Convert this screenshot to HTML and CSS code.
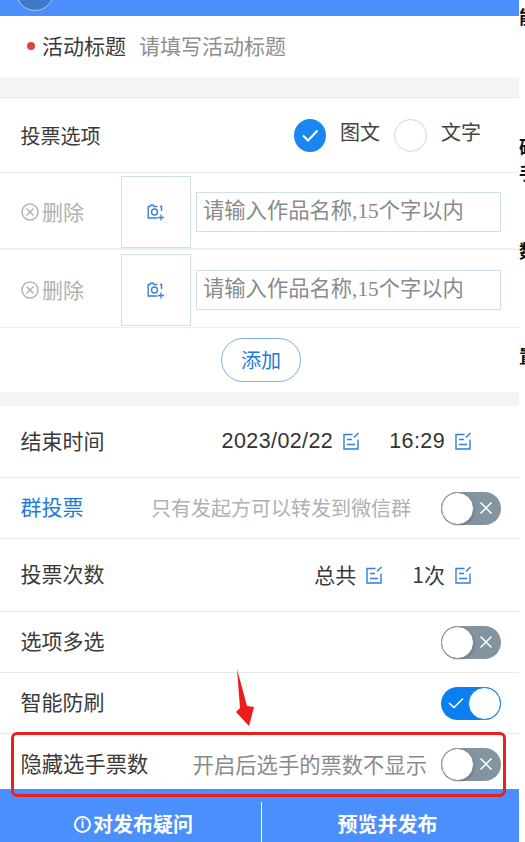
FILE: index.html
```html
<!DOCTYPE html>
<html lang="zh">
<head>
<meta charset="utf-8">
<title>投票设置</title>
<link rel="stylesheet" href="styles.css">
</head>
<body>
<svg class="defs" width="0" height="0" aria-hidden="true">
  <symbol id="edit" viewBox="0 0 16 18">
    <path d="M9.500 2.500H1v14.500h14V7.500" fill="none" stroke="#2f7fe0" stroke-width="1.400"/>
    <path d="M4 7.500h5M4 12.500h8" fill="none" stroke="#2f7fe0" stroke-width="1.400"/>
    <path d="M11 5.500L15.500 1" fill="none" stroke="#2f7fe0" stroke-width="1.400"/>
  </symbol>
  <symbol id="cam" viewBox="0 0 18 18">
    <path d="M10.500 3.500H7L6 2H4L3 3.500H1.200v11.500h9.300M14.500 8V3.500H13" fill="none" stroke="#3b7fd8" stroke-width="1.400"/>
    <circle cx="7.500" cy="9" r="3" fill="none" stroke="#3b7fd8" stroke-width="1.400"/>
    <path d="M14 11.500v6M11 14.500h6" fill="none" stroke="#3b7fd8" stroke-width="1.300"/>
  </symbol>
  <symbol id="del" viewBox="0 0 18 18">
    <circle cx="9" cy="9" r="8" fill="none" stroke="#b4b4b4" stroke-width="1.500"/>
    <path d="M5.500 5.500l7 7M12.500 5.500l-7 7" fill="none" stroke="#b4b4b4" stroke-width="1.500"/>
  </symbol>
</svg>

<div class="behind right">
  <span class="frag f1">能</span>
  <span class="frag f2">确</span>
  <span class="frag f3">手</span>
  <span class="frag f4">数</span>
  <span class="frag f5">置</span>
</div>

<main class="panel">
  <header class="top"><span class="avatar"></span></header>

  <section class="title-row">
    <i class="dot"></i>
    <span class="title-label">活动标题</span>
    <span class="title-hint">请填写活动标题</span>
  </section>

  <div class="band band-a"></div>

  <section class="opt-head">
    <span class="label">投票选项</span>
    <span class="radios">
      <span class="radio on"><svg viewBox="0 0 32 32" width="32" height="32"><path d="M9 16.500l5 5 9.500-10" fill="none" stroke="#fff" stroke-width="2"/></svg></span>
      <span class="radio-text">图文</span>
      <span class="radio"></span>
      <span class="radio-text">文字</span>
    </span>
  </section>

  <section class="opt-row">
    <span class="del"><svg width="18" height="18"><use href="#del"/></svg>删除</span>
    <span class="pic"><svg width="18" height="18"><use href="#cam"/></svg></span>
    <span class="name">请输入作品名称,15个字以内</span>
  </section>
  <section class="opt-row second">
    <span class="del"><svg width="18" height="18"><use href="#del"/></svg>删除</span>
    <span class="pic"><svg width="18" height="18"><use href="#cam"/></svg></span>
    <span class="name">请输入作品名称,15个字以内</span>
  </section>

  <section class="add-row"><span class="add">添加</span></section>

  <div class="band band-b"></div>

  <section class="row r-end">
    <span class="label">结束时间</span>
    <span class="vals">
      <span class="num">2023/02/22</span><svg class="ed" width="16" height="18"><use href="#edit"/></svg>
      <span class="num t">16:29</span><svg class="ed" width="16" height="18"><use href="#edit"/></svg>
    </span>
  </section>

  <section class="row r-group">
    <span class="label blue">群投票</span>
    <span class="hint">只有发起方可以转发到微信群</span>
    <span class="toggle"><i class="knob"></i><svg class="x" viewBox="0 0 14 14" width="14" height="14"><path d="M1.500 1.500l11 11M12.500 1.500l-11 11" stroke="#fff" stroke-width="1.500"/></svg></span>
  </section>

  <section class="row r-count">
    <span class="label">投票次数</span>
    <span class="vals">
      <span class="val">总共</span><svg class="ed" width="16" height="18"><use href="#edit"/></svg>
      <span class="val c">1次</span><svg class="ed" width="16" height="18"><use href="#edit"/></svg>
    </span>
  </section>

  <section class="row r-multi">
    <span class="label">选项多选</span>
    <span class="toggle"><i class="knob"></i><svg class="x" viewBox="0 0 14 14" width="14" height="14"><path d="M1.500 1.500l11 11M12.500 1.500l-11 11" stroke="#fff" stroke-width="1.500"/></svg></span>
  </section>

  <section class="row r-smart">
    <span class="label">智能防刷</span>
    <span class="toggle on"><svg class="v" viewBox="0 0 16 12" width="16" height="12"><path d="M1 6l5 4.500L15 1.500" fill="none" stroke="#fff" stroke-width="1.600"/></svg><i class="knob"></i></span>
  </section>

  <section class="row r-hide">
    <span class="label">隐藏选手票数</span>
    <span class="hint dark">开启后选手的票数不显示</span>
    <span class="toggle"><i class="knob"></i><svg class="x" viewBox="0 0 14 14" width="14" height="14"><path d="M1.500 1.500l11 11M12.500 1.500l-11 11" stroke="#fff" stroke-width="1.500"/></svg></span>
  </section>

  <footer class="foot">
    <span class="foot-btn first"><i class="info">i</i>对发布疑问</span>
    <span class="foot-btn divided">预览并发布</span>
  </footer>
</main>

<div class="mark-box"></div>
<svg class="mark-arrow" width="24" height="60" viewBox="0 0 24 60"><polygon points="2,0 12,37 19,38 14,57 1,43 5,39" fill="#ee1c1c"/></svg>
</body>
</html>
```

FILE: styles.css
```css
* { box-sizing: border-box; }
html, body { margin: 0; padding: 0; }
body {
  width: 525px;
  height: 842px;
  overflow: hidden;
  position: relative;
  background: #fff;
  color: #333;
  font-family: "Noto Sans CJK SC", "Liberation Sans", sans-serif;
  font-size: 20px;
  line-height: 1.2;
}
.defs { position: absolute; }

.behind { position: absolute; top: 0; left: 519px; width: 6px; height: 842px; overflow: hidden; }
.frag { position: absolute; left: 0; font-size: 18px; font-weight: 700; color: #111; line-height: 1; }
.f1 { top: 7px; }
.f2 { top: 137px; }
.f3 { top: 163px; }
.f4 { top: 241px; }
.f5 { top: 346px; }

.panel { width: 519px; height: 842px; background: #fff; display: flex; flex-direction: column; }

.top { height: 16px; background: #4a8ffc; position: relative; overflow: hidden; flex: none; }
.avatar {
  position: absolute; left: 16px; top: -27px;
  width: 38px; height: 38px; border-radius: 50%;
  background: #3e78c8; border: 1px solid #a9c6ee;
}

.title-row { height: 61px; display: flex; align-items: center; padding: 0 0 2px 27px; flex: none; }
.dot { width: 8px; height: 8px; border-radius: 50%; background: #e0423a; margin-right: 7px; }
.title-label { font-size: 21px; color: #3a3a3a; }
.title-hint { font-size: 21px; color: #8e8e8e; margin-left: 13px; }

.band { background: #f4f4f4; flex: none; }
.band-a { height: 21px; border-bottom: 1px solid #e8e8e8; }
.band-b { height: 14px; }

.label { font-size: 21px; color: #3a3a3a; margin: -2px 0 0 -.5px; }
.r-hide .label { font-size: 21.300px; }
.blue { color: #1f7ae0; }

.opt-head {
  height: 75px; display: flex; align-items: center; justify-content: space-between;
  padding: 0 24px 0 21px; border-bottom: 1px solid #e8edf1; flex: none;
}
.opt-head .label { font-size: 20px; margin: 2px 0 0 -.5px; }
.radios { display: flex; align-items: center; }
.radio { width: 33px; height: 33px; border-radius: 50%; border: 1px solid #d4d4d4; display: block; }
.radio.on { width: 32px; background: #1a87f0; border: 0; }
.radio-text { font-size: 20px; color: #444; margin: -6px 14px 0 14px; }

.opt-row { height: 77px; display: flex; align-items: center; padding: 3px 0 0 21px; border-bottom: 2px solid #eef0f2; flex: none; }
.opt-row.second { height: 78px; border-bottom: 1px solid #eee; }
.del { width: 100px; font-size: 21px; color: #b0b0b0; display: flex; align-items: center; gap: 3px; }
.pic { width: 70px; height: 72px; border: 1px solid #cfe0ef; display: flex; align-items: center; justify-content: center; }
.name {
  width: 305px; height: 40px; margin-left: 5px; padding-left: 6px;
  border: 1px solid #cfe0ef; color: #8a8a8a; font-size: 21.300px; display: flex; align-items: center;
  font-family: "Liberation Serif", "Noto Sans CJK SC", serif;
}

.add-row { height: 64px; display: flex; justify-content: center; padding: 10px 0 0 3px; flex: none; }
.add {
  width: 80px; height: 44px; border-radius: 22px; border: 1px solid #7fb0e0;
  color: #1f7ae0; font-size: 20px; display: flex; align-items: center; justify-content: center;
}

.row { display: flex; align-items: center; padding: 0 18px 0 21px; border-bottom: 1px solid #e9e9e9; flex: none; }
.r-end { height: 72px; }
.r-group { height: 61px; }
.r-count { height: 73px; }
.r-multi { height: 61px; }
.r-smart { height: 61px; }
.r-hide { height: 55px; border-bottom: 0; padding-top: 5px; }

.vals { margin-left: auto; display: flex; align-items: center; padding-right: 30px; }
.num { font-family: "Liberation Sans", sans-serif; font-size: 21.500px; color: #333; letter-spacing: .4px; }
.num.t { margin-left: 30px; }
.ed { margin-left: 10px; flex: none; }
.val { font-size: 21px; color: #3a3a3a; }
.val.c { margin-left: 30px; }

.hint { font-size: 20px; color: #b0b0b0; margin-left: auto; margin-right: 30px; }
.hint.dark { font-size: 21.300px; color: #8a8a8a; margin-right: 14px; }

.toggle {
  width: 60px; height: 33px; border-radius: 17px; background: #82949f;
  display: flex; align-items: center; justify-content: space-between; flex: none; padding-right: 8px;
  margin-left: auto;
}
.hint + .toggle { margin-left: 0; }
.knob { width: 33px; height: 33px; border-radius: 50%; background: #fff; border: 1px solid #8a8a8a; box-shadow: 1px 1px 1px rgba(0,0,0,.15); display: block; }
.toggle.on { background: #0a80f0; padding: 0 0 0 7px; }
.toggle.on .knob { border-color: #0a80f0; box-shadow: none; }

.foot { height: 53px; background: #4a8ffc; display: flex; color: #fff; flex: none; align-items: flex-end; }
.foot-btn { height: 40px; display: flex; align-items: flex-start; justify-content: center; font-weight: 700; font-size: 20px; line-height: 24px; padding-top: 10px; }
.foot-btn.first { width: 261px; padding-left: 6px; }
.foot-btn.divided { flex: 1; border-left: 1px solid #fff; padding-right: 6px; }
.info {
  width: 17px; height: 17px; border: 2px solid #fff; border-radius: 50%; flex: none;
  font-style: normal; font-size: 12px; line-height: 13px; text-align: center; margin: 4px 2px 0 0;
  font-family: "Liberation Sans", sans-serif;
}

.mark-box { position: absolute; left: 11px; top: 732px; width: 495px; height: 65px; border: 3px solid #e8201f; border-radius: 6px; }
.mark-arrow { position: absolute; left: 235px; top: 669px; }
```
